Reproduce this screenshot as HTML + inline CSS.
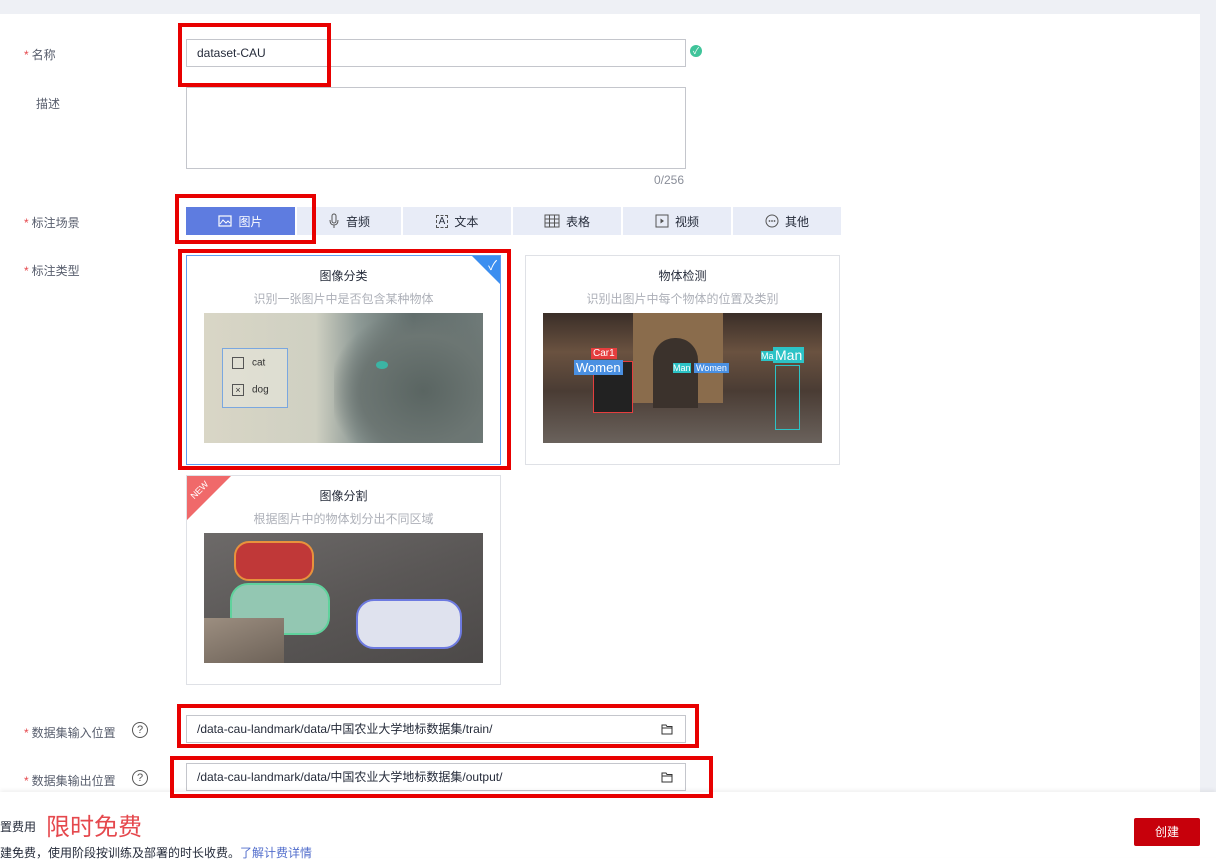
<!DOCTYPE html>
<html><head><meta charset="utf-8"><style>
*{margin:0;padding:0;box-sizing:border-box}
body{width:1216px;height:857px;overflow:hidden;background:#fff;font-family:"Liberation Sans","Noto Sans CJK SC",sans-serif;font-size:12px;color:#252b3a;position:relative}
.a{position:absolute}
.lbl{position:absolute;font-size:12px;color:#575d6c}
.st{color:#e5484d;margin-right:3px}
.inp{position:absolute;border:1px solid #c4c6cc;background:#fff;height:28px;padding-left:10px;line-height:26px;font-size:12px;color:#252b3a}
.red{position:absolute;border:4px solid #e80000}
.tab{position:absolute;top:207px;height:28px;width:108px;background:#e8ecf7;color:#252b3a;font-size:12px;display:flex;align-items:center;justify-content:center;gap:6px}
.card{position:absolute;border:1px solid #dfe1e6;background:#fff;text-align:center}
.card .t{margin-top:11px;font-size:12px;color:#252b3a}
.card .d{margin-top:6px;font-size:12px;color:#adb0b8}
.img{position:absolute;left:17px;top:57px;width:279px;height:130px;overflow:hidden}
.fold{position:absolute;right:12px;top:8px}
</style></head><body>
<div class="a" style="left:0;top:0;width:1216px;height:14px;background:#eef0f5"></div>
<div class="a" style="left:1200px;top:0;width:16px;height:792px;background:#eef0f5"></div>

<div class="lbl" style="left:24px;top:46px"><span class="st">*</span>名称</div>
<div class="inp" style="left:186px;top:39px;width:500px">dataset-CAU</div>
<div class="a" style="left:690px;top:45px;width:12px;height:12px;border-radius:50%;background:#3fc49a;color:#fff;font-size:9px;line-height:12px;text-align:center">✓</div>
<div class="red" style="left:178px;top:23px;width:153px;height:64px"></div>

<div class="lbl" style="left:36px;top:95px">描述</div>
<div class="a" style="left:186px;top:87px;width:500px;height:82px;border:1px solid #c4c6cc"></div>
<div class="a" style="left:654px;top:173px;color:#8a8e99;font-size:12px">0/256</div>

<div class="lbl" style="left:24px;top:214px"><span class="st">*</span>标注场景</div>
<div class="tab" style="left:186px;width:109px;background:#5e7ce0;color:#fff"><svg width="14" height="12" viewBox="0 0 14 12"><rect x="1" y="1" width="12" height="10" fill="none" stroke="#fff" stroke-width="1.2"/><path d="M2 9 L5 5 L8 8 L10 6 L12 8" fill="none" stroke="#fff"/></svg>图片</div>
<div class="tab" style="left:297px;width:104px"><svg width="12" height="16" viewBox="0 0 12 16"><rect x="4" y="1" width="4" height="9" rx="2" fill="none" stroke="#555"/><path d="M2 7 Q2 12 6 12 Q10 12 10 7 M6 12 V15" fill="none" stroke="#555"/></svg>音频</div>
<div class="tab" style="left:403px"><span style="border:1px dashed #555;font-size:10px;padding:0 2px">A</span>文本</div>
<div class="tab" style="left:513px"><svg width="16" height="14" viewBox="0 0 16 14"><rect x="1" y="1" width="14" height="12" fill="none" stroke="#555"/><path d="M1 5H15M1 9H15M5.5 1V13M10.5 1V13" stroke="#555"/></svg>表格</div>
<div class="tab" style="left:623px"><svg width="14" height="14" viewBox="0 0 14 14"><rect x="1" y="1" width="12" height="12" fill="none" stroke="#555"/><path d="M5.5 4.5L9 7L5.5 9.5Z" fill="#555"/></svg>视频</div>
<div class="tab" style="left:733px"><svg width="14" height="14" viewBox="0 0 14 14"><circle cx="7" cy="7" r="6" fill="none" stroke="#555"/><circle cx="4.5" cy="7" r=".9" fill="#555"/><circle cx="7" cy="7" r=".9" fill="#555"/><circle cx="9.5" cy="7" r=".9" fill="#555"/></svg>其他</div>
<div class="red" style="left:175px;top:194px;width:141px;height:50px"></div>

<div class="lbl" style="left:24px;top:262px"><span class="st">*</span>标注类型</div>

<div class="card" style="left:186px;top:255px;width:315px;height:210px;border-color:#5e9cf0">
<div class="t">图像分类</div><div class="d">识别一张图片中是否包含某种物体</div>
<div class="a" style="right:0;top:0;width:0;height:0;border-top:28px solid #3b8ef0;border-left:28px solid transparent"></div>
<div class="a" style="right:3px;top:-1px;color:#fff;font-size:13px">✓</div>
<div class="img" style="background:linear-gradient(90deg,#d9d6c6 0%,#cfd0c2 40%,#8e9a96 55%,#5e6b6a 75%,#6f7a78 100%)">
<div class="a" style="left:130px;top:0;width:149px;height:130px;background:radial-gradient(ellipse at 60% 60%,#5a6562 0%,#6c7673 50%,transparent 75%)"></div>
<div class="a" style="left:172px;top:48px;width:12px;height:8px;border-radius:50%;background:#3cb4a4"></div>
<div class="a" style="left:18px;top:35px;width:66px;height:60px;border:1px solid #7aa7e0;background:rgba(230,230,220,.6)"></div>
<div class="a" style="left:28px;top:44px;font-size:10px;color:#333"><span style="display:inline-block;width:12px;height:12px;border:1px solid #555;margin-right:8px;vertical-align:middle"></span>cat</div>
<div class="a" style="left:28px;top:71px;font-size:10px;color:#333"><span style="display:inline-block;width:12px;height:12px;border:1px solid #555;margin-right:8px;vertical-align:middle;font-size:9px;line-height:10px;text-align:center">×</span>dog</div>
</div></div>
<div class="red" style="left:178px;top:249px;width:333px;height:221px"></div>

<div class="card" style="left:525px;top:255px;width:315px;height:210px">
<div class="t">物体检测</div><div class="d">识别出图片中每个物体的位置及类别</div>
<div class="img" style="background:linear-gradient(180deg,#3a2e28 0%,#6a5240 30%,#4a3c34 60%,#6a625c 100%)">
<div class="a" style="left:90px;top:0;width:90px;height:90px;background:#8a6c4c"></div>
<div class="a" style="left:110px;top:25px;width:45px;height:70px;border-radius:22px 22px 0 0;background:#3b322c"></div>
<div class="a" style="left:48px;top:35px;background:#e53e3e;color:#fff;font-size:10px;padding:0 2px">Car1</div>
<div class="a" style="left:50px;top:48px;width:40px;height:52px;border:1px solid #e53e3e;background:#222"></div>
<div class="a" style="left:31px;top:47px;background:#4a90e2;color:#fff;font-size:13px;padding:0 2px">Women</div>
<div class="a" style="left:130px;top:50px;background:#2cc3c6;color:#fff;font-size:9px">Man</div>
<div class="a" style="left:151px;top:50px;background:#4a90e2;color:#fff;font-size:9px;padding:0 2px">Women</div>
<div class="a" style="left:230px;top:34px;background:#2cc3c6;color:#fff;font-size:14px;padding:0 2px">Man</div>
<div class="a" style="left:218px;top:38px;background:#2cc3c6;color:#fff;font-size:9px">Ma</div>
<div class="a" style="left:232px;top:52px;width:25px;height:65px;border:1px solid #2cc3c6"></div>
</div></div>

<div class="card" style="left:186px;top:475px;width:315px;height:210px">
<div class="t">图像分割</div><div class="d">根据图片中的物体划分出不同区域</div>
<div class="a" style="left:0;top:0;width:0;height:0;border-top:44px solid #f0696a;border-right:44px solid transparent"></div>
<div class="a" style="left:2px;top:9px;color:#fff;font-size:9px;transform:rotate(-45deg)">NEW</div>
<div class="img" style="background:linear-gradient(160deg,#6d6a69 0%,#5a5756 50%,#4c4948 100%)">
<div class="a" style="left:30px;top:8px;width:80px;height:40px;border-radius:15px;background:#c03838;border:2px solid #e8923c"></div>
<div class="a" style="left:26px;top:50px;width:100px;height:52px;border-radius:18px;background:#93c7b2;border:2px solid #5fd29c"></div>
<div class="a" style="left:152px;top:66px;width:106px;height:50px;border-radius:18px;background:#dfe2ee;border:2px solid #6d7ae0"></div>
<div class="a" style="left:0;top:85px;width:80px;height:45px;background:linear-gradient(160deg,#9c8e80,#6d6258)"></div>
</div></div>

<div class="lbl" style="left:24px;top:724px"><span class="st">*</span>数据集输入位置</div>
<div class="a" style="left:132px;top:722px;width:16px;height:16px;border:1px solid #555;border-radius:50%;text-align:center;font-size:11px;line-height:14px;color:#555">?</div>
<div class="inp" style="left:186px;top:715px;width:500px">/data-cau-landmark/data/中国农业大学地标数据集/train/<svg class="fold" width="12" height="11" viewBox="0 0 12 11"><path d="M1 1H5L6 2.5H11V10H1Z M1 4H11" fill="none" stroke="#333"/></svg></div>
<div class="red" style="left:177px;top:704px;width:522px;height:44px"></div>

<div class="lbl" style="left:24px;top:772px"><span class="st">*</span>数据集输出位置</div>
<div class="a" style="left:132px;top:770px;width:16px;height:16px;border:1px solid #555;border-radius:50%;text-align:center;font-size:11px;line-height:14px;color:#555">?</div>
<div class="inp" style="left:186px;top:763px;width:500px">/data-cau-landmark/data/中国农业大学地标数据集/output/<svg class="fold" width="12" height="11" viewBox="0 0 12 11"><path d="M1 1H5L6 2.5H11V10H1Z M1 4H11" fill="none" stroke="#333"/></svg></div>

<div class="a" style="left:0;top:792px;width:1216px;height:65px;background:#fff;box-shadow:0 -2px 4px rgba(0,0,0,.06)"></div>
<div class="red" style="left:170px;top:756px;width:543px;height:42px"></div>
<div class="a" style="left:0;top:818px;font-size:12px;color:#252b3a">置费用</div>
<div class="a" style="left:46px;top:807px;font-size:24px;color:#e5484d">限时免费</div>
<div class="a" style="left:0;top:844px;font-size:12px;color:#252b3a">建免费，使用阶段按训练及部署的时长收费。<span style="color:#526ecc">了解计费详情</span></div>
<div class="a" style="left:1134px;top:818px;width:66px;height:28px;background:#c7000b;color:#fff;font-size:12px;text-align:center;line-height:28px;border-radius:2px">创建</div>
</body></html>
